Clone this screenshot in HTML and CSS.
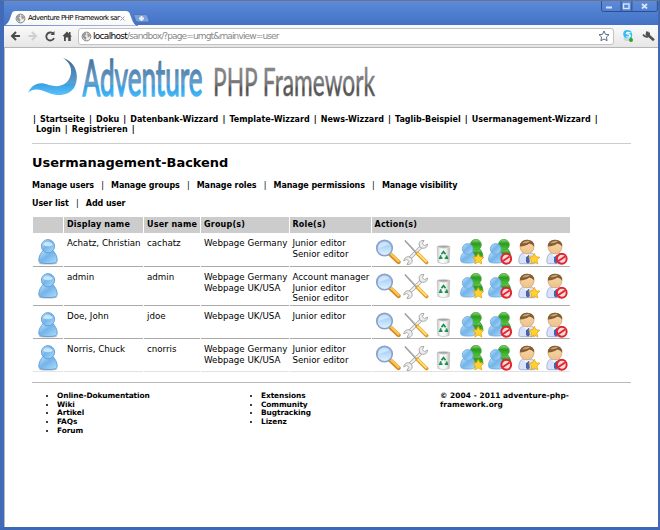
FILE: index.html
```
<!DOCTYPE html>
<html lang="de">
<head>
<meta charset="utf-8">
<title>Adventure PHP Framework sandbox</title>
<link rel="stylesheet" href="styles.css">
</head>
<body>
<svg class="defs" width="0" height="0" aria-hidden="true">
  <defs>
    <linearGradient id="blue" x1="0" y1="0" x2="1" y2="1"><stop offset="0" stop-color="#c4e6fc"/><stop offset=".45" stop-color="#74b4ea"/><stop offset="1" stop-color="#addffc"/></linearGradient>
    <linearGradient id="green" x1="0" y1="0" x2="0" y2="1"><stop offset="0" stop-color="#8fd878"/><stop offset=".4" stop-color="#2a9a20"/><stop offset="1" stop-color="#4bcb33"/></linearGradient>
    <linearGradient id="skin" x1="0" y1="0" x2="0" y2="1"><stop offset="0" stop-color="#f8d7a8"/><stop offset="1" stop-color="#edc28c"/></linearGradient>
    <linearGradient id="lens" x1="0" y1="0" x2="0" y2="1"><stop offset="0" stop-color="#8fc0f4"/><stop offset="1" stop-color="#e2f5ff"/></linearGradient>
    <linearGradient id="can" x1="0" y1="0" x2="1" y2="0"><stop offset="0" stop-color="#c8c8c8"/><stop offset=".3" stop-color="#fff"/><stop offset=".7" stop-color="#f2f2f2"/><stop offset="1" stop-color="#b4b4b4"/></linearGradient>
    <symbol id="globe" viewBox="0 0 12 12"><circle cx="6" cy="6" r="4.8" fill="#eee" stroke="#777" stroke-width="1"/><path d="M2 3l3-1 1 2-2 1 2 2-1 3-3-3zM7 2l3 2-1 3-2-1z" fill="#999"/></symbol>
    <symbol id="star" viewBox="0 0 12 12"><path d="M6 .7l1.6 3.4 3.8.4-2.8 2.6.8 3.9L6 9.1 2.6 11l.8-3.9L.6 4.5l3.8-.4z" fill="#ffd42e" stroke="#e89a10" stroke-width=".7"/></symbol>
    <symbol id="deny" viewBox="0 0 12 12"><circle cx="6" cy="6" r="4.7" fill="#fbdada" stroke="#df2630" stroke-width="1.900"/><path d="M2.8 8.2l6.4-4.4" stroke="#df2630" stroke-width="1.900"/></symbol>
    <symbol id="person" viewBox="0 0 20 26"><ellipse cx="10" cy="24" rx="9.500" ry="1.600" fill="#777" opacity=".45"/><path d="M5 11.500C3 14 .8 17 .8 21c0 2 1.300 2.800 3.200 3.100 4 .6 8 .6 12 0 1.900-.3 3.200-1.100 3.200-3.100 0-4-2.200-7-4.200-9.500z" fill="url(#blue)" stroke="#5c9bd6" stroke-width=".9"/><circle cx="10" cy="7.200" r="6.600" fill="url(#blue)" stroke="#5c9bd6" stroke-width=".9"/><path d="M5.200 6a5 4 0 0 1 9.600 0q-4.800 2.500-9.600 0z" fill="#e2f4ff" opacity=".75"/></symbol>
    <symbol id="find" viewBox="0 0 26 26"><path d="M15.500 15.500l8 7.500" stroke="#d08a2a" stroke-width="4.400" stroke-linecap="round"/><path d="M16 15l7.500 7.200" stroke="#ffc64f" stroke-width="2.400" stroke-linecap="round"/><circle cx="9.500" cy="9" r="7.800" fill="url(#lens)" stroke="#8c9fc6" stroke-width="1.600"/><path d="M3.500 9a6 6 0 0 1 11-3.500z" fill="#fff" opacity=".45"/></symbol>
    <symbol id="tools" viewBox="0 0 26 26"><path d="M5 21L20 6" stroke="#a2a2a2" stroke-width="3.400"/><path d="M5 21L20 6" stroke="#f0f0f0" stroke-width="2"/><path d="M24.500 5l-3 1.700-2.200-2L21 1.500q-4.500-.5-5 3.500 0 4 3.500 4.300Q24.500 9.500 24.500 5zM.8 22l3-1.700 2 2L4 25.500q5 .2 5.300-3.800-.3-4-3.800-4Q1.300 17.800.8 22z" fill="#eee" stroke="#a2a2a2" stroke-width=".9"/><path d="M2 1.500l12 13" stroke="#888" stroke-width="1.600"/><path d="M2.500 1.500l12 13" stroke="#ddd" stroke-width=".7"/><path d="M14.500 14.500l9 9" stroke="#dc9a28" stroke-width="3.800" stroke-linecap="round"/><path d="M15 14.500l8 8" stroke="#ffe070" stroke-width="2" stroke-linecap="round"/></symbol>
    <symbol id="bin" viewBox="0 0 16 22"><path d="M1.300 2.500h13.400l-.7 17q-6 2.500-12 0z" fill="url(#can)" stroke="#bbb" stroke-width=".7"/><ellipse cx="8" cy="2.700" rx="6.700" ry="1.500" fill="#a6a6a6" stroke="#ddd" stroke-width=".9"/><path d="M5.800 10.800L8 8l2.200 2.800M11 12l1 2.800H9.300M6.900 14.800H4.200L5.400 12" fill="none" stroke="#16904a" stroke-width="1.800"/></symbol>
    <symbol id="duo" viewBox="0 0 25 26"><path d="M12.500 10.500q-2.500 3-2.500 7.500 0 3 3 3h8q3 0 2.800-4-.5-3.500-3-6.500z" fill="url(#green)" stroke="#3c9a34" stroke-width=".8"/><circle cx="16.500" cy="6" r="5.700" fill="url(#green)" stroke="#4ba13c" stroke-width=".8"/><path d="M4 13.500q-3.500 3-3.500 7.500 0 3.500 3.300 3.800 5 .6 9.400 0 2.800-.3 2.800-3.800 0-4-3-7.500z" fill="url(#blue)" stroke="#6aa6dc" stroke-width=".8"/><circle cx="8" cy="10.300" r="5.600" fill="url(#blue)" stroke="#6aa6dc" stroke-width=".8"/></symbol>
    <symbol id="clerk" viewBox="0 0 22 26"><path d="M4.500 14Q.8 16 .8 22.500q0 2.200 2 2.200h14q2-3-1-8.700-1-2-3-2z" fill="#d8e2fc" stroke="#98a6cf" stroke-width=".8"/><path d="M8 16h3l.8 7-1.800 1.700L8 23z" fill="#4864ab"/><path d="M5.500 14l3 4 4-4z" fill="#fff"/><circle cx="9" cy="8" r="6.900" fill="url(#skin)" stroke="#c99a60" stroke-width=".7"/><path d="M1.800 7.500Q2 .8 9 .8q7.500 0 7.200 6.700-2-2.500-5-3-3 2.500-9.400 3z" fill="#855c30"/><path d="M3.800 4.300q3.200-3.300 8.200-2.300-2 2.500-8.200 2.300z" fill="#c4a67e"/></symbol>
    <g id="actions">
      <use href="#find" x="0" y="0" width="26" height="26"/>
      <use href="#tools" x="28" y="0" width="26" height="26"/>
      <use href="#bin" x="61" y="5" width="15" height="21"/>
      <use href="#duo" x="85" y="0" width="24" height="25"/><use href="#star" x="97" y="13.500" width="12.500" height="12.500"/>
      <use href="#duo" x="113" y="0" width="24" height="25"/><use href="#deny" x="125" y="13.500" width="12.500" height="12.500"/>
      <use href="#clerk" x="143" y="0" width="22" height="26"/><use href="#star" x="153" y="13.500" width="12.500" height="12.500"/>
      <use href="#clerk" x="171" y="0" width="22" height="26"/><use href="#deny" x="180.500" y="13.500" width="12.500" height="12.500"/>
    </g>
  </defs>
</svg>
<div class="window">
  <header class="titlebar">
    <svg class="tabshape" width="155" height="16" viewBox="0 0 155 16"><defs><linearGradient id="tabg" x1="0" y1="0" x2="0" y2="1"><stop offset="0" stop-color="#fff"/><stop offset="1" stop-color="#f8f8f8"/></linearGradient></defs><path d="M0 15.500Q3.500 14 5 10L7.500 3Q8.500.5 11 .5h111q3 0 4 2.500l3 8q1.500 4 5 5z" fill="url(#tabg)" stroke="#426fbd" stroke-width=".8"/><path d="M130 4.500h11q2 0 2.500 1.500l1.500 4q.5 2-1.500 2H134q-2 0-2.500-2L130 6q-.5-1.500 0-1.500z" fill="#7c9fda" stroke="#4770b8" stroke-width=".8"/><path d="M137.500 6v5M135 8.500h5" stroke="#e9eff9" stroke-width="2"/></svg>
    <div class="tab"><svg width="11" height="11"><use href="#globe" width="11" height="11"/></svg><span class="tabtitle">Adventure PHP Framework sar</span><svg width="5" height="5"><path d="M.5.5l4 4M4.500.5l-4 4" stroke="#999"/></svg></div>
    <svg class="controls" width="58" height="11" viewBox="0 0 58 11"><path d="M.5 0v8.500q0 2 2 2h53q2 0 2-2V0M20.500 0v10M31.500 0v10" transform="translate(1 0) scale(.98 1)" fill="none" stroke="#294f93"/><g fill="none" stroke="#d9e6fa"><path d="M6 6.500h6" stroke-width="2"/><rect x="23.500" y="3" width="5.500" height="4.500" stroke-width="1.400"/><path d="M42 3l5 4.500M47 3l-5 4.500" stroke-width="1.700"/></g></svg>
  </header>
  <div class="toolbar">
    <svg class="navicons" width="68" height="18" viewBox="0 0 68 18"><path d="M4 9h8M8 5L4 9l4 4" fill="none" stroke="#4b4b4b" stroke-width="2"/><path d="M20.500 9h7M24 5l4 4-4 4" fill="none" stroke="#cfcfcf" stroke-width="2"/><path d="M45 6.500A4 4 0 1 0 46 11" fill="none" stroke="#4b4b4b" stroke-width="1.800"/><path d="M42.500 8h4V4z" fill="#4b4b4b"/><path transform="translate(1 0)" d="M53.500 9L58 4.500l2 2V5h1.500v3l1.500 1.500h-1.200V14h-2.600v-3.500h-2.400V14H55V9.500z" fill="#4b4b4b"/></svg>
    <div class="address"><svg width="11" height="11"><use href="#globe" width="11" height="11"/></svg><span class="url"><b>localhost</b>/sandbox/?page=umgt&amp;mainview=user</span><svg class="fav" width="12" height="12" viewBox="0 0 12 12"><path d="M6 1l1.500 3.300 3.500.4-2.600 2.400.7 3.600L6 9l-3.100 1.700.7-3.600L1 4.700l3.500-.4z" fill="#fff" stroke="#5c6c88"/></svg></div>
    <svg width="36" height="14" viewBox="0 0 36 14"><path d="M4 2q3-2 7 0 2 3 1 7-4 3-7 0Q2 6 4 2z" fill="#39bdec"/><path d="M10.500 4Q7 2.500 6.500 4.500 10 5.500 10.300 7q-1 2-4 .5" fill="none" stroke="#fff" stroke-width="1.300"/><path d="M3 9l7 0 1 3H5z" fill="#c9d6dc"/><circle cx="11" cy="11" r="2" fill="#2ca52c"/><path d="M27.500 2.500l-.6 3 2 1.200 5 4.500" fill="none" stroke="#505050" stroke-width="2.600"/><path d="M23 5.500q2 3 4.500 2.300Q30 6.500 28.800 3.500" fill="none" stroke="#505050" stroke-width="1.800"/></svg>
  </div>
  <main class="page">
    <svg class="logo" width="356" height="50" viewBox="0 0 356 50">
      <defs><linearGradient id="wave" x1="0" y1="0" x2="0" y2="1"><stop offset="0" stop-color="#3c6792"/><stop offset=".68" stop-color="#5b9fd2"/><stop offset=".72" stop-color="#3aa3e6"/><stop offset="1" stop-color="#5ac2fa"/></linearGradient>
      <linearGradient id="adv" gradientUnits="userSpaceOnUse" x1="0" y1="4" x2="0" y2="43"><stop offset="0" stop-color="#466e99"/><stop offset=".7" stop-color="#64a0cc"/><stop offset=".74" stop-color="#349be0"/><stop offset="1" stop-color="#44b7f7"/></linearGradient>
      <linearGradient id="php" gradientUnits="userSpaceOnUse" x1="0" y1="13" x2="0" y2="43"><stop offset="0" stop-color="#8a8a8a"/><stop offset=".6" stop-color="#777"/><stop offset=".75" stop-color="#4d4d4d"/><stop offset="1" stop-color="#606060"/></linearGradient></defs>
      <path d="M35 5C42 9 45 17 42 24 39 32 31 35 21 32 11 28 4 31 0 40 6 34 13 37 21 40 31 44 41 42 46 35 52 25 49 9 35 5z" fill="url(#wave)"/>
      <text class="advtext" x="54.500" y="42.500" textLength="120" lengthAdjust="spacingAndGlyphs" fill="url(#adv)" stroke="url(#adv)">Adventure</text>
      <text class="phptext" x="185" y="42.500" textLength="162" lengthAdjust="spacingAndGlyphs" fill="url(#php)" stroke="url(#php)">PHP Framework</text>
    </svg>
    <nav class="mainnav">| <a>Startseite</a> | <a>Doku</a> | <a>Datenbank-Wizzard</a> | <a>Template-Wizzard</a> | <a>News-Wizzard</a> | <a>Taglib-Beispiel</a> | <a>Usermanagement-Wizzard</a> |<br><span class="second"><a>Login</a> | <a>Registrieren</a> |</span></nav>
    <hr>
    <h1>Usermanagement-Backend</h1>
    <nav class="subnav"><a>Manage users</a><i>|</i><a>Manage groups</a><i>|</i><a>Manage roles</a><i>|</i><a>Manage permissions</a><i>|</i><a>Manage visibility</a></nav>
    <nav class="subnav lower"><a>User list</a><i>|</i><a>Add user</a></nav>
    <table>
      <colgroup><col class="c1"><col class="c2"><col class="c3"><col class="c4"><col class="c5"><col class="c6"></colgroup>
      <tr class="head"><th></th><th>Display name</th><th>User name</th><th>Group(s)</th><th>Role(s)</th><th>Action(s)</th></tr>
      <tr class="r1"><td><svg class="avatar"><use href="#person"/></svg></td><td>Achatz, Christian</td><td>cachatz</td><td>Webpage Germany</td><td>Junior editor<br>Senior editor</td><td><svg class="acts"><use href="#actions"/></svg></td></tr>
      <tr class="r2"><td><svg class="avatar"><use href="#person"/></svg></td><td>admin</td><td>admin</td><td>Webpage Germany<br>Webpage UK/USA</td><td>Account manager<br>Junior editor<br>Senior editor</td><td><svg class="acts"><use href="#actions"/></svg></td></tr>
      <tr class="r3"><td><svg class="avatar"><use href="#person"/></svg></td><td>Doe, John</td><td>jdoe</td><td>Webpage UK/USA</td><td>Junior editor</td><td><svg class="acts"><use href="#actions"/></svg></td></tr>
      <tr class="r4"><td><svg class="avatar"><use href="#person"/></svg></td><td>Norris, Chuck</td><td>cnorris</td><td>Webpage Germany<br>Webpage UK/USA</td><td>Junior editor<br>Senior editor</td><td><svg class="acts"><use href="#actions"/></svg></td></tr>
    </table>
    <hr class="foot">
    <footer>
      <ul><li>Online-Dokumentation</li><li>Wiki</li><li>Artikel</li><li>FAQs</li><li>Forum</li></ul>
      <ul><li>Extensions</li><li>Community</li><li>Bugtracking</li><li>Lizenz</li></ul>
      <p>© 2004 - 2011 adventure-php-<br>framework.org</p>
    </footer>
  </main>
</div>
</body>
</html>
```
FILE: styles.css
```
* { box-sizing: border-box; }
body { margin: 0; overflow: hidden; font-family: "DejaVu Sans", sans-serif; font-size: 8px; color: #000; }
.defs { position: absolute; }
svg { display: block; flex: none; }
.window { width: 660px; height: 530px; display: flex; flex-direction: column; border-style: solid; border-width: 1px 2px 3px 4px; border-color: #68748c #4268b0 #3d68b5 #416bb8; background: #fff; }
.titlebar { height: 24px; flex: none; position: relative; background: linear-gradient(#5d8bd9, #4371c5); padding: 11px 0 0 11px; }
.tabshape { position: absolute; left: 0; top: 9px; }
.tab { position: relative; height: 12px; width: 110px; display: flex; align-items: center; gap: 2px; }
.tabtitle { width: 90px; flex: none; white-space: nowrap; font-size: 7px; letter-spacing: -.55px; }
.controls { position: absolute; right: 0; top: 0; }
.toolbar { height: 23px; flex: none; display: flex; align-items: center; padding: 0 2px 0 4px; background: linear-gradient(#fbfbfb, #e6e6e6); border-bottom: 1px solid #b5b5b5; }
.address { width: 542px; height: 17px; margin: 0 6px 0 2px; padding: 0 2px; display: flex; align-items: center; gap: 1px; border: 1px solid #c2c2c2; border-radius: 3px; background: #fff; }
.url { flex: 1; font: 9px "DejaVu Sans", sans-serif; letter-spacing: -.86px; color: #888; white-space: nowrap; }
.url b { font-weight: normal; color: #000; letter-spacing: -.7px; }
.fav { margin-right: 1px; }
.page { flex: 1; border-left: 1px solid #bbb; padding: 2px 27px 0 27px; }
.logo { margin: 3px 0 0 -4px; overflow: visible; }
.advtext { font: 51px Lato, sans-serif; stroke-width: 1.6px; }
.phptext { font: 38px Lato, sans-serif; stroke-width: .5px; }
.mainnav { margin: 11.500px 0 -.5px; font-weight: bold; line-height: 10.5px; white-space: nowrap; padding-left: 1px; word-spacing: 1.3px; }
.second { padding-left: 3px; }
hr { margin: 8px 0 0; border: 0; height: 1px; background: #ccc; }
h1 { margin: 10px 0 0; font-size: 12.950px; line-height: 17px; white-space: nowrap; }
.subnav { margin-top: 9px; height: 12px; line-height: 12px; font-weight: bold; letter-spacing: -.08px; white-space: nowrap; display: flex; }
.subnav i { font-style: normal; font-weight: normal; width: 17px; text-align: center; }
.subnav.lower { margin-top: 6px; }
table { width: 539px; table-layout: fixed; border-collapse: separate; border-spacing: 1.5px 0; margin: 7px 0 0 0; }
.c1 { width: 30px; } .c2 { width: 79px; } .c3 { width: 56px; } .c4 { width: 87.500px; } .c5 { width: 81px; }
th { height: 16px; background: #ccc; padding: 0 2px 0 3px; text-align: left; line-height: 16px; letter-spacing: .2px; white-space: nowrap; }
td { padding: 5px 0 0 3px; vertical-align: top; line-height: 10.500px; font-size: 8.700px; white-space: nowrap; border-bottom: 1px solid #aaa; }
.r1 { height: 34px; } .r2 { height: 39px; } .r3, .r4 { height: 33px; }
.r4 td { border-color: #e2e2e2; }
.avatar { width: 20px; height: 26px; margin: 1px 0 0 2px; }
.acts { width: 195px; height: 26px; margin: 1px 0 0 .5px; }
tr td:first-child, tr td:last-child { line-height: 0; }
hr.foot { margin-top: 10px; background: #b9b9b9; }
footer { display: grid; grid-template-columns: 204px 204px 180px; margin-top: 9px; font-size: 7.400px; letter-spacing: -.08px; font-weight: bold; line-height: 8.700px; }
footer p { margin: 0; white-space: nowrap; letter-spacing: .08px; }
ul { margin: 0; padding: 0 0 0 25px; }
```
